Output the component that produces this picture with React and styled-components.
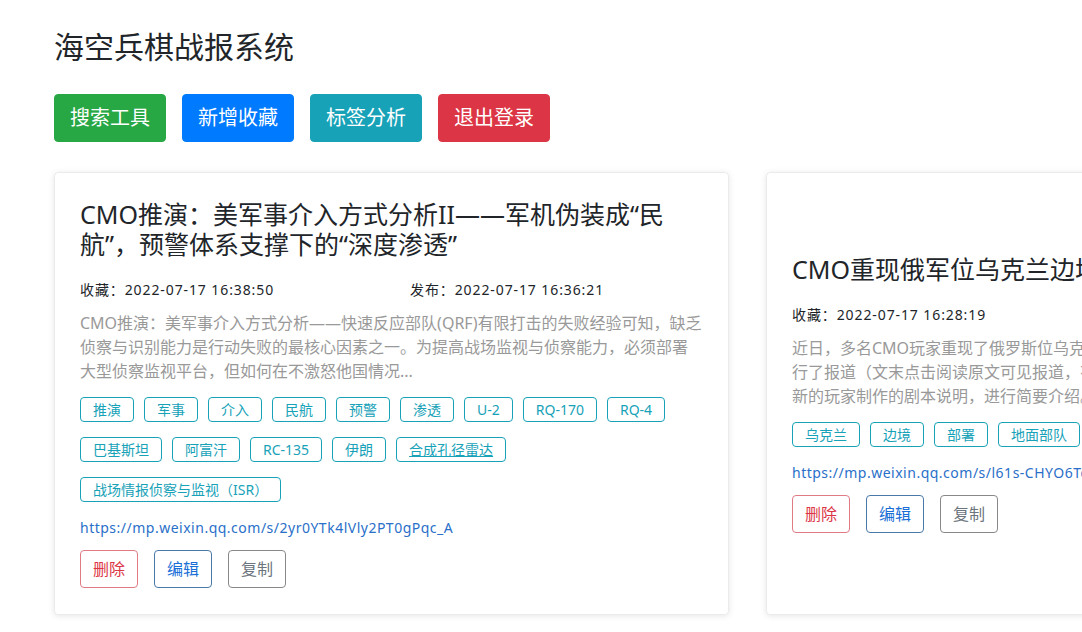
import React from 'react';
import styled, { createGlobalStyle } from 'styled-components';

const GlobalStyle = createGlobalStyle`
    html, body {
        margin: 0;
        padding: 0;
        background: #fff;
        overflow: hidden;
    }
    body {
        font-family: "Noto Sans", "Noto Sans CJK SC", sans-serif;
        color: #212529;
    }
`;

const Page = styled.div`
    width: 1082px;
    height: 632px;
    overflow: hidden;
    padding: 28px 0 0 54px;
    box-sizing: border-box;
`;

const Heading = styled.h1`
    margin: 0 0 28px;
    font-size: 30px;
    font-weight: 400;
    line-height: 38px;
    color: #212529;
`;

const Toolbar = styled.div`
    display: flex;
    gap: 16px;
    margin-bottom: 30px;
`;

const ToolButton = styled.button`
    font-family: inherit;
    font-size: 20px;
    line-height: 30px;
    padding: 8px 15px;
    border: 1px solid ${({ color }) => color};
    background: ${({ color }) => color};
    color: #fff;
    border-radius: 4px;
`;

const CardRow = styled.div`
    display: flex;
    gap: 37px;
    align-items: stretch;
`;

const Card = styled.div`
    flex: none;
    width: 675px;
    box-sizing: border-box;
    padding: 26px 25px;
    border: 1px solid rgba(0, 0, 0, 0.08);
    border-radius: 4px;
    box-shadow: 0 1px 6px rgba(0, 0, 0, 0.1);
    display: flex;
    flex-direction: column;
    justify-content: center;
`;

const Title = styled.h2`
    margin: 0 0 21px;
    font-size: 25px;
    font-weight: 400;
    line-height: 30px;
    color: #212529;
    white-space: ${({ nowrap }) => (nowrap ? 'nowrap' : 'normal')};
`;

const Meta = styled.div`
    display: grid;
    grid-template-columns: 1fr 1fr;
    column-gap: 37px;
    font-size: 14px;
    line-height: 20px;
    letter-spacing: 0.9px;
    color: #212529;
    margin-bottom: 11px;
`;

const Desc = styled.p`
    margin: 0 0 14px;
    font-size: 16px;
    line-height: 24px;
    color: #999;
    white-space: ${({ nowrap }) => (nowrap ? 'nowrap' : 'normal')};
`;

const Tags = styled.div`
    display: flex;
    flex-wrap: wrap;
    gap: 15px 10px;
    margin-bottom: 16px;
    width: ${({ nowrap }) => (nowrap ? '1000px' : 'auto')};
`;

const Tag = styled.span`
    display: inline-block;
    font-size: 14px;
    line-height: 23px;
    padding: 0 12px;
    border: 1px solid #17a2b8;
    border-radius: 4px;
    color: #17a2b8;
    text-decoration: ${({ underline }) => (underline ? 'underline' : 'none')};
`;

const Link = styled.a`
    display: block;
    font-size: 14px;
    line-height: 20px;
    letter-spacing: 0.5px;
    color: #2a6fc9;
    text-decoration: none;
    margin-bottom: 12px;
    white-space: nowrap;
`;

const Actions = styled.div`
    display: flex;
    gap: 16px;
`;

const ActionButton = styled.button`
    font-family: inherit;
    font-size: 16px;
    line-height: 24px;
    padding: 6px 12px;
    background: #fff;
    border: 1px solid ${({ border }) => border};
    color: ${({ color }) => color};
    border-radius: 4px;
`;

const cards = [
    {
        title: 'CMO推演：美军事介入方式分析II——军机伪装成“民航”，预警体系支撑下的“深度渗透”',
        saved: '2022-07-17 16:38:50',
        published: '2022-07-17 16:36:21',
        desc: 'CMO推演：美军事介入方式分析——快速反应部队(QRF)有限打击的失败经验可知，缺乏侦察与识别能力是行动失败的最核心因素之一。为提高战场监视与侦察能力，必须部署大型侦察监视平台，但如何在不激怒他国情况...',
        tags: ['推演', '军事', '介入', '民航', '预警', '渗透', 'U-2', 'RQ-170', 'RQ-4', '巴基斯坦', '阿富汗', 'RC-135', '伊朗', '合成孔径雷达', '战场情报侦察与监视（ISR）'],
        hovered: '合成孔径雷达',
        url: 'https://mp.weixin.qq.com/s/2yr0YTk4lVly2PT0gPqc_A',
    },
    {
        title: 'CMO重现俄军位乌克兰边境兵力部署',
        saved: '2022-07-17 16:28:19',
        desc: [
            '近日，多名CMO玩家重现了俄罗斯位乌克兰边境的兵力部署，多家媒体对此进',
            '行了报道（文末点击阅读原文可见报道，有删节），本文对其中一份较为全',
            '新的玩家制作的剧本说明，进行简要介绍。',
        ],
        tags: ['乌克兰', '边境', '部署', '地面部队', '防空'],
        url: 'https://mp.weixin.qq.com/s/l61s-CHYO6TqkP3xWm0dLA',
        nowrap: true,
    },
];

export default function App() {
    return (
        <Page>
            <GlobalStyle />
            <Heading>海空兵棋战报系统</Heading>
            <Toolbar>
                <ToolButton color="#28a745">搜索工具</ToolButton>
                <ToolButton color="#007bff">新增收藏</ToolButton>
                <ToolButton color="#17a2b8">标签分析</ToolButton>
                <ToolButton color="#dc3545">退出登录</ToolButton>
            </Toolbar>
            <CardRow>
                {cards.map((card) => (
                    <Card key={card.url}>
                        <Title nowrap={card.nowrap}>{card.title}</Title>
                        <Meta>
                            <span>收藏：{card.saved}</span>
                            {card.published && <span>发布：{card.published}</span>}
                        </Meta>
                        {Array.isArray(card.desc) ? (
                            <Desc nowrap>
                                {card.desc.map((line) => (
                                    <React.Fragment key={line}>
                                        {line}
                                        <br />
                                    </React.Fragment>
                                ))}
                            </Desc>
                        ) : (
                            <Desc>{card.desc}</Desc>
                        )}
                        <Tags nowrap={card.nowrap}>
                            {card.tags.map((tag) => (
                                <Tag key={tag} underline={tag === card.hovered}>
                                    {tag}
                                </Tag>
                            ))}
                        </Tags>
                        <Link href="#">{card.url}</Link>
                        <Actions>
                            <ActionButton border="#e07b86" color="#dc3545">删除</ActionButton>
                            <ActionButton border="#4a78a8" color="#1a6fd6">编辑</ActionButton>
                            <ActionButton border="#888" color="#6c757d">复制</ActionButton>
                        </Actions>
                    </Card>
                ))}
            </CardRow>
        </Page>
    );
}
